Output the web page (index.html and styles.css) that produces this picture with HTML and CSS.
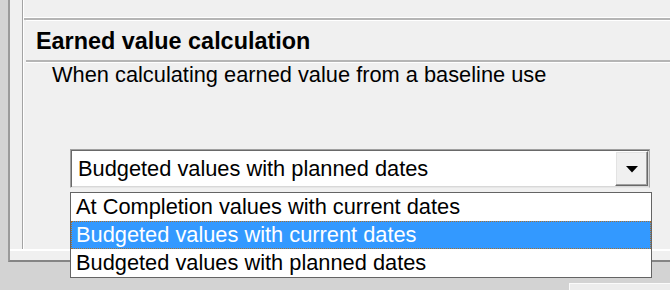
FILE: index.html
```html
<!DOCTYPE html>
<html lang="en">
<head>
<meta charset="utf-8">
<title>Earned value calculation</title>
<link rel="stylesheet" href="styles.css">
</head>
<body>
<div class="window">
  <div class="pane">
    <div class="section">
      <div class="prev"></div>
      <div class="group">
        <div class="heading">Earned value calculation</div>
        <div class="desc">When calculating earned value from a baseline use</div>
        <div class="combo-wrap">
          <div class="combo">
            <div class="combo-text">Budgeted values with planned dates</div>
            <div class="combo-btn">
              <svg width="12" height="7" viewBox="0 0 12 7" aria-hidden="true"><polygon points="0,0 12,0 6,6.5" fill="#000"/></svg>
            </div>
          </div>
          <ul class="list">
            <li class="item">At Completion values with current dates</li>
            <li class="item selected">Budgeted values with current dates</li>
            <li class="item">Budgeted values with planned dates</li>
          </ul>
        </div>
      </div>
    </div>
  </div>
</div>
<div class="footer">
  <div class="btn-edge"></div>
</div>
</body>
</html>
```

FILE: styles.css
```css
html, body {
  margin: 0;
  padding: 0;
}
body {
  width: 670px;
  height: 290px;
  overflow: hidden;
  background: #d3d3d3;
  font-family: "Liberation Sans", Arial, sans-serif;
  color: #000;
}
.window {
  box-sizing: border-box;
  height: 262px;
  margin-left: 8px;
  border-left: 2px solid #9a9a9a;
  border-bottom: 2px solid #858585;
  background: #f0f0f0;
}
.pane {
  box-sizing: border-box;
  height: 251px;
  padding-left: 12px;
  border-bottom: 2px solid #ffffff;
}
.section {
  height: 100%;
  border-left: 1px solid #a3a3a3;
  box-shadow: inset 1px 0 0 #ffffff;
  padding-left: 1px;
}
.prev {
  height: 17px;
  border-bottom: 1px solid #ffffff;
}
.group {
  border-top: 2px solid #b5b5b5;
}
.heading {
  margin-left: 2px;
  padding: 1px 0 0 10px;
  height: 38px;
  line-height: 38px;
  border-top: 1px solid #ffffff;
  border-bottom: 2px solid #b5b5b5;
  box-shadow: 0 1px 0 #ffffff;
  font-weight: bold;
  font-size: 23.4px;
}
.desc {
  margin-top: 1px;
  padding-left: 28px;
  font-size: 21.8px;
  line-height: 24px;
  height: 24px;
}
.combo-wrap {
  position: relative;
  margin: 62px 0 0 46px;
  width: 580px;
}
.combo {
  box-sizing: border-box;
  display: flex;
  height: 39px;
  background: #ffffff;
  border: 1px solid;
  border-color: #a0a0a0 #a8a8a8 #e6e6e6 #a0a0a0;
  box-shadow: inset 1px 1px 0 #696969, inset -1px -1px 0 #d8d8d8;
  padding: 1px;
}
.combo-text {
  flex: 1;
  padding-left: 6px;
  font-size: 21.8px;
  line-height: 35px;
  white-space: nowrap;
}
.combo-btn {
  box-sizing: border-box;
  width: 33px;
  display: flex;
  align-items: center;
  justify-content: center;
  background: #f0f0f0;
  border: 1px solid;
  border-color: #ffffff #696969 #696969 #ffffff;
  box-shadow: inset -1px -1px 0 #a0a0a0, inset 1px 1px 0 #e3e3e3;
  padding-top: 1px;
}
.list {
  position: absolute;
  left: 0;
  top: 43px;
  width: 582px;
  box-sizing: border-box;
  margin: 0;
  padding: 0;
  list-style: none;
  background: #ffffff;
  border: 1px solid #646464;
  z-index: 2;
}
.item {
  height: 28px;
  line-height: 28px;
  padding-left: 5px;
  font-size: 21.8px;
  white-space: nowrap;
}
.item.selected {
  background: #3399ff;
  color: #ffffff;
  outline: 1px dotted #a8702f;
  outline-offset: -1px;
}
.footer {
  display: flex;
  justify-content: flex-end;
  height: 28px;
}
.btn-edge {
  margin-top: 21px;
  width: 100px;
  height: 7px;
  background: #ededed;
  border-top: 1px solid #fbfbfb;
  border-left: 1px solid #fbfbfb;
}
```
